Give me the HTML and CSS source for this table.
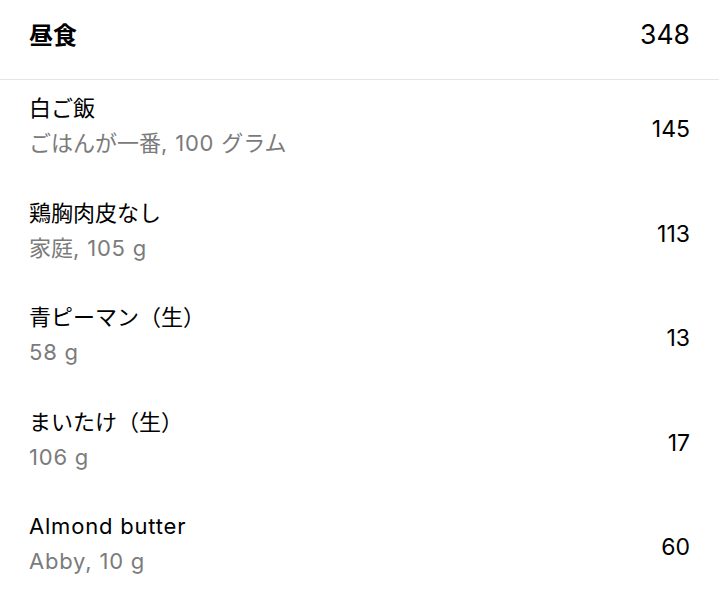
FILE: index.html
```html
<!DOCTYPE html>
<html lang="ja">
<head>
<meta charset="utf-8">
<link rel="stylesheet" href="styles.css">
</head>
<body>
<div class="meal">
  <div class="meal-header">
    <span class="meal-title">昼食</span>
    <span class="meal-total">348</span>
  </div>
  <div class="item">
    <div class="item-text">
      <div class="item-name">白ご飯</div>
      <div class="item-sub">ごはんが一番<span class="lt">, 100 </span>グラム</div>
    </div>
    <div class="item-cal">145</div>
  </div>
  <div class="item">
    <div class="item-text">
      <div class="item-name">鶏胸肉皮なし</div>
      <div class="item-sub">家庭<span class="lt">, 105 g</span></div>
    </div>
    <div class="item-cal">113</div>
  </div>
  <div class="item">
    <div class="item-text">
      <div class="item-name">青ピーマン（生）</div>
      <div class="item-sub lt">58 g</div>
    </div>
    <div class="item-cal">13</div>
  </div>
  <div class="item">
    <div class="item-text">
      <div class="item-name">まいたけ（生）</div>
      <div class="item-sub lt">106 g</div>
    </div>
    <div class="item-cal">17</div>
  </div>
  <div class="item">
    <div class="item-text">
      <div class="item-name lt">Almond butter</div>
      <div class="item-sub lt">Abby, 10 g</div>
    </div>
    <div class="item-cal">60</div>
  </div>
</div>
</body>
</html>
```
FILE: styles.css
```css
html, body {
  margin: 0;
  padding: 0;
  background: #ffffff;
}
body {
  font-family: Inter, "Noto Sans CJK JP", sans-serif;
  color: #000;
}
.meal-header {
  height: 67px;
  padding: 0 29px 12px;
  border-bottom: 1px solid #e6e6e6;
  display: flex;
  justify-content: space-between;
  align-items: center;
}
.meal-title {
  font-size: 24px;
  font-weight: 700;
}
.meal-total {
  font-size: 26.5px;
  font-weight: 400;
}
.item {
  display: flex;
  justify-content: space-between;
  align-items: center;
  padding: 14px 29px 27.5px;
}
.item-name {
  font-size: 22px;
  line-height: 28px;
}
.item-sub {
  font-size: 22px;
  line-height: 28px;
  margin-top: 7px;
  color: #7b7b7b;
}
.lt {
  letter-spacing: 0.8px;
}
.item-cal {
  font-size: 23px;
  margin-top: 7px;
}
```
